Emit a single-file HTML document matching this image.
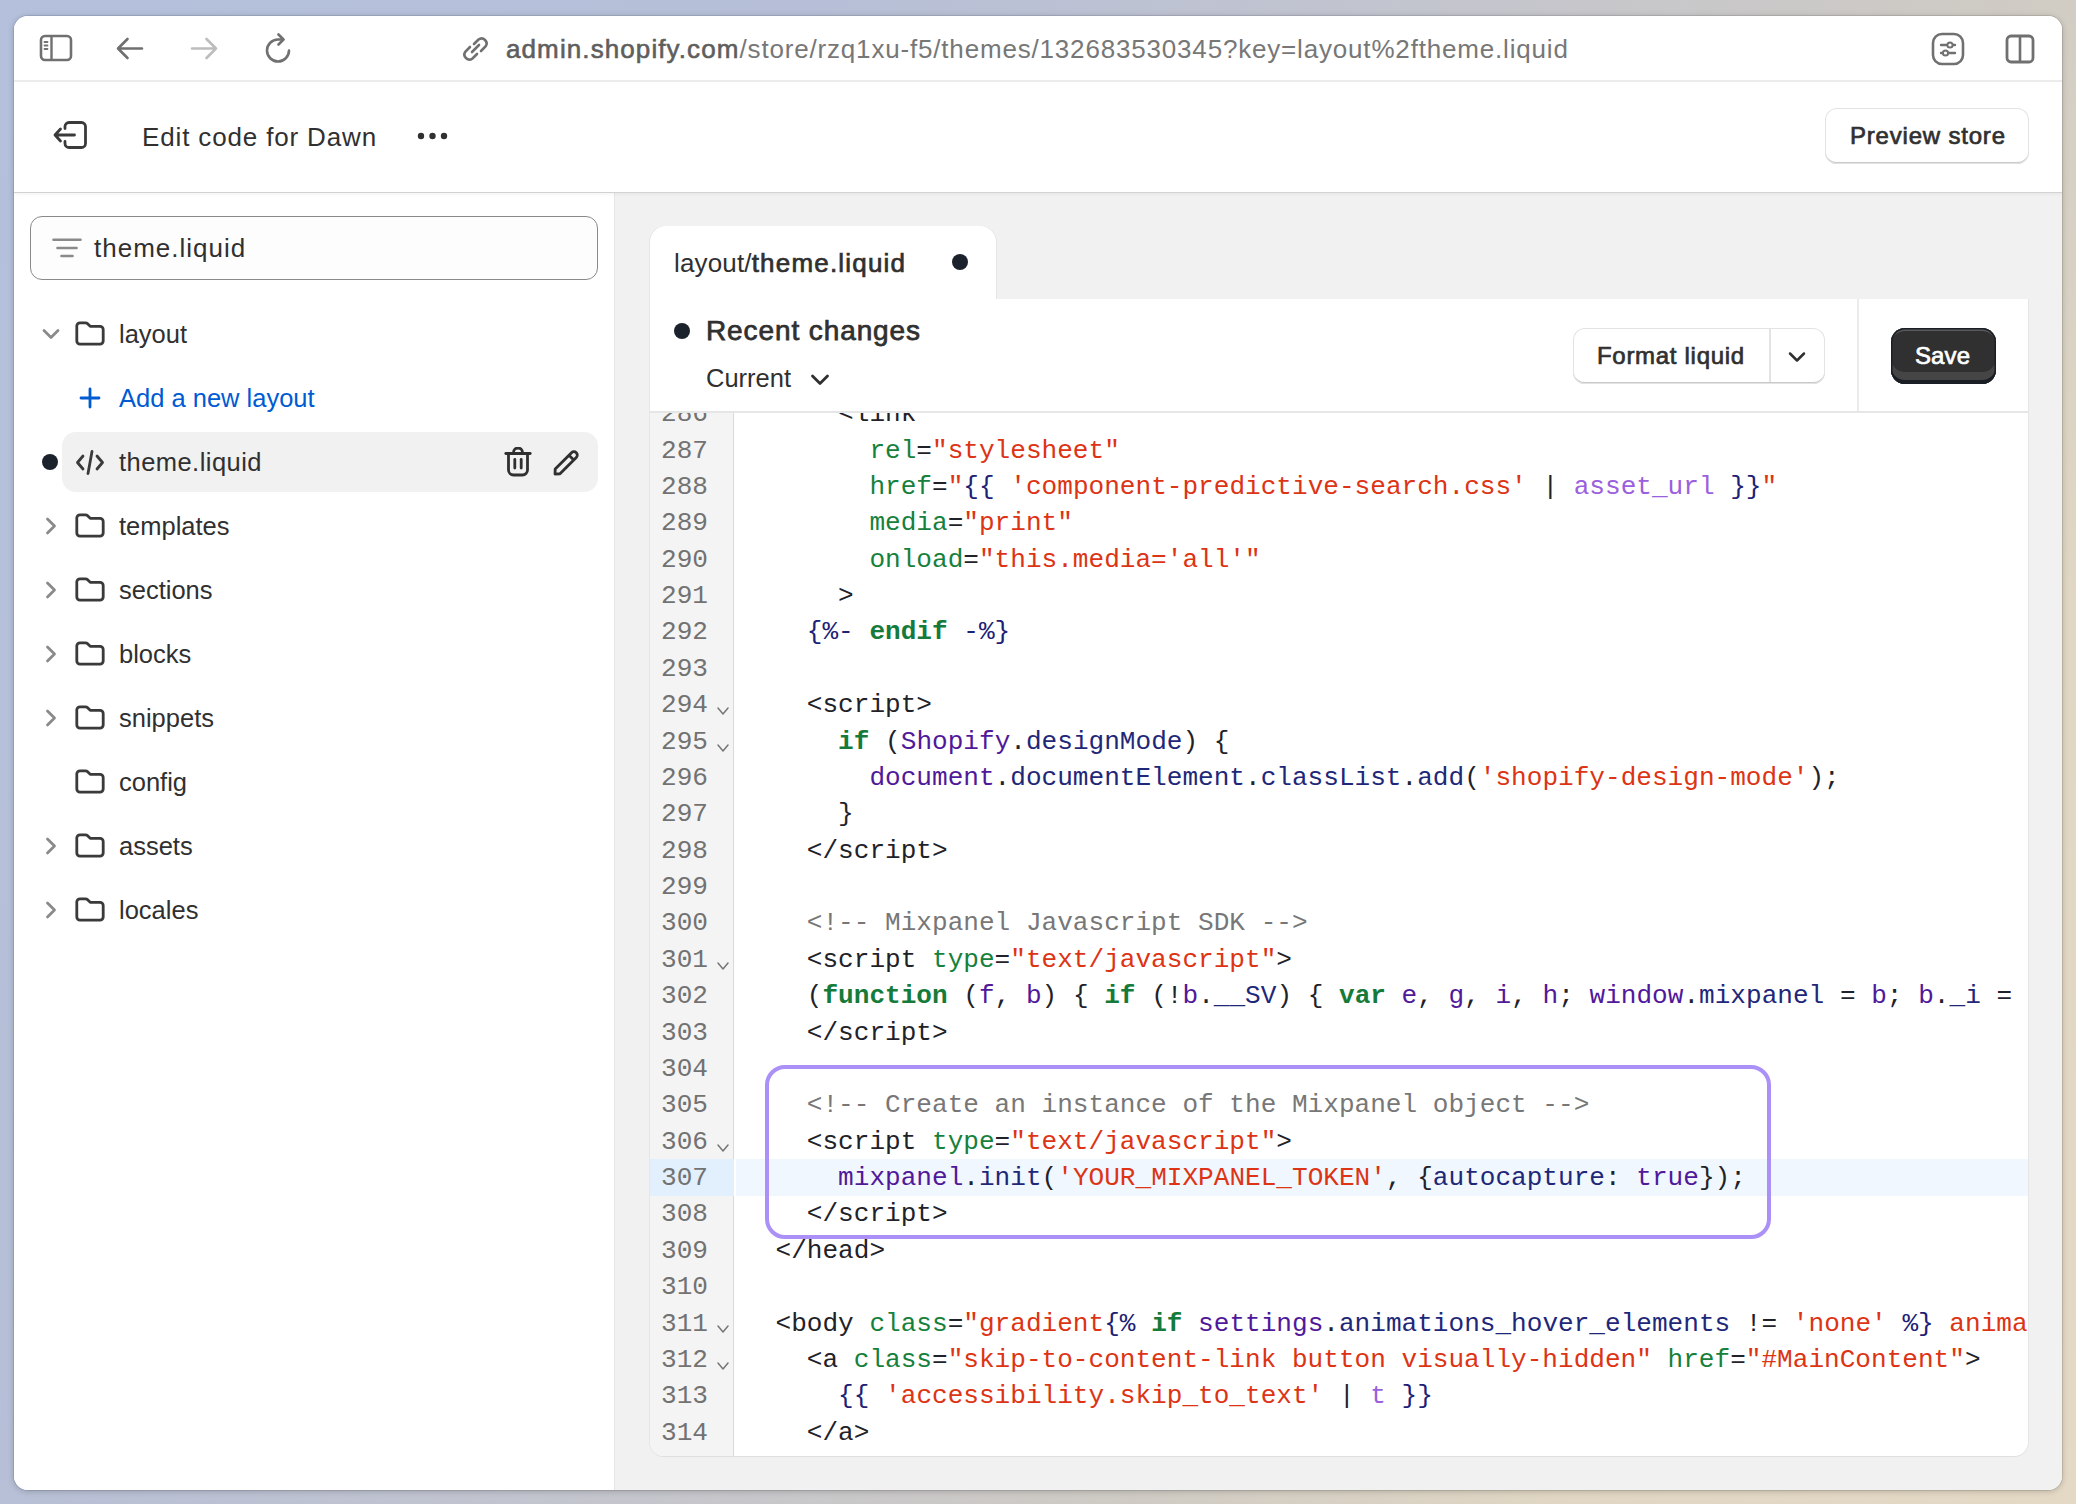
<!DOCTYPE html>
<html><head><meta charset="utf-8">
<style>
*{box-sizing:border-box;margin:0;padding:0}
html,body{width:2076px;height:1504px;overflow:hidden}
body{position:relative;font-family:"Liberation Sans",sans-serif;color:#303030;
background:linear-gradient(120deg,#b4c0dc 0%,#b6bfd7 28%,#bfc3d1 42%,#cfcbc4 68%,#e0d6c3 82%,#e4d9c5 100%)}
.abs{position:absolute}
#win{position:absolute;left:14px;top:16px;width:2048px;height:1474px;background:#fff;border-radius:14px;overflow:hidden;
box-shadow:0 0 0 1px rgba(0,0,0,0.09),0 1px 6px rgba(0,0,0,0.22)}
#toolbar{position:absolute;left:0;top:0;width:2048px;height:66px;background:#fff;border-bottom:2px solid #ededed}
#apphdr{position:absolute;left:0;top:66px;width:2048px;height:111px;background:#fff;border-bottom:1.5px solid #d2d2d2;box-shadow:0 1px 4px rgba(0,0,0,0.06);z-index:2}
#side{position:absolute;left:0;top:177px;width:600px;height:1297px;background:#fff}
#main{position:absolute;left:600px;top:177px;width:1448px;height:1297px;background:#f1f1f1;border-left:1px solid #e6e6e6}
.url{position:absolute;left:492px;top:16.5px;font-size:26px;line-height:32px;color:#777;white-space:nowrap;letter-spacing:0.82px}
.url b{color:#5e5e5e;font-weight:normal;letter-spacing:1.1px;-webkit-text-stroke:0.6px #5e5e5e}
.txt{position:absolute;white-space:nowrap}
.btn{position:absolute;background:#fff;border-radius:12px;box-shadow:inset 0 0 0 1px #e3e3e3,inset 0 -2px 0 #c9c9c9}
.row{position:absolute;left:0;width:600px;height:42px}
.row .lbl{position:absolute;left:105px;top:4px;font-size:25.5px;line-height:34px;color:#303030;white-space:nowrap}
.chev{position:absolute;left:28px;top:15px;width:18px;height:12px}
.chevr{position:absolute;left:31px;top:12px;width:12px;height:18px}
.fold{position:absolute;left:61px;top:8px;width:30px;height:25px}
#ed{position:absolute;left:0;top:0;width:2076px;height:1504px}
#code{position:absolute;left:650px;top:413px;width:1378px;height:1043px;overflow:hidden;border-radius:0 0 14px 14px}
#gut{position:absolute;left:0;top:0;width:84px;height:1043px;background:#f4f4f4;border-right:1.5px solid #d9d9d9}
#hl1{position:absolute;left:0;top:746.4px;width:84px;height:36.37px;background:#e2effc}
#hl2{position:absolute;left:85.5px;top:746.4px;width:1300px;height:36.37px;background:#f0f7fe}
pre{font-family:"Liberation Mono",monospace;font-size:26.08px;line-height:36.37px;white-space:pre}
#nums{position:absolute;left:0;top:-16.8px;width:58px;text-align:right;color:#727272}
#src{position:absolute;left:125.5px;top:-16.8px;color:#1f2329}
.fm{position:absolute;left:67px;width:12px;height:8px}
#box{position:absolute;left:115px;top:652px;width:1006px;height:174px;border:4px solid #ab90f8;border-radius:20px}
.a{color:#16813c}.s{color:#dc3414}.l{color:#1d2175}.k{color:#167b3a;font-weight:bold}.v{color:#51199a}.p{color:#1f2878}.f{color:#9a60de}.c{color:#777}
</style></head><body>
<div id="win">
  <div id="toolbar">
    <!-- sidebar icon -->
    <svg class="abs" style="left:25px;top:18px" width="34" height="28" viewBox="0 0 34 28"><rect x="2" y="2" width="30" height="24" rx="4" fill="none" stroke="#707070" stroke-width="2.6"/><line x1="12.5" y1="2" x2="12.5" y2="26" stroke="#707070" stroke-width="2.4"/><line x1="5.5" y1="8" x2="8.5" y2="8" stroke="#707070" stroke-width="1.8" stroke-linecap="round"/><line x1="5.5" y1="11.5" x2="8.5" y2="11.5" stroke="#707070" stroke-width="1.8" stroke-linecap="round"/><line x1="5.5" y1="15" x2="8.5" y2="15" stroke="#707070" stroke-width="1.8" stroke-linecap="round"/></svg>
    <!-- back -->
    <svg class="abs" style="left:101px;top:20px" width="30" height="26" viewBox="0 0 30 26"><path d="M3 12.5 H27 M12.5 3 L3 12.5 L12.5 22" fill="none" stroke="#707070" stroke-width="2.6" stroke-linecap="round" stroke-linejoin="round"/></svg>
    <!-- fwd -->
    <svg class="abs" style="left:175px;top:20px" width="30" height="26" viewBox="0 0 30 26"><path d="M3 12.5 H27 M17.5 3 L27 12.5 L17.5 22" fill="none" stroke="#bdbdbd" stroke-width="2.6" stroke-linecap="round" stroke-linejoin="round"/></svg>
    <!-- reload -->
    <svg class="abs" style="left:250px;top:17px" width="30" height="32" viewBox="0 0 30 32"><path d="M25 17.5 A11 11 0 1 1 14 6.5 H19" fill="none" stroke="#707070" stroke-width="2.6" stroke-linecap="round"/><path d="M14.5 1.5 L19.5 6.5 L14.5 11.5" fill="none" stroke="#707070" stroke-width="2.6" stroke-linecap="round" stroke-linejoin="round"/></svg>
    <!-- link -->
    <svg class="abs" style="left:447px;top:19px" width="30" height="28" viewBox="0 0 30 28"><g fill="none" stroke="#707070" stroke-width="2.6" stroke-linecap="round"><path d="M13 9 L17.5 4.5 A5 5 0 0 1 24.5 11.5 L20 16"/><path d="M16 19 L11.5 23.5 A5 5 0 0 1 4.5 16.5 L9 12"/><path d="M11 17 L18 10"/></g></svg>
    <div class="url"><b>admin.shopify.com</b>/store/rzq1xu-f5/themes/132683530345?key=layout%2ftheme.liquid</div>
    <!-- settings icon -->
    <svg class="abs" style="left:1917px;top:16px" width="34" height="34" viewBox="0 0 34 34"><rect x="2" y="2" width="30" height="30" rx="9" fill="none" stroke="#707070" stroke-width="2.6"/><g stroke="#707070" stroke-width="2.4" stroke-linecap="round" fill="none"><line x1="10" y1="13" x2="24" y2="13"/><line x1="10" y1="21" x2="24" y2="21"/></g><circle cx="19" cy="13" r="2.6" fill="#fff" stroke="#707070" stroke-width="2"/><circle cx="14.5" cy="21" r="2.6" fill="#fff" stroke="#707070" stroke-width="2"/></svg>
    <!-- split icon -->
    <svg class="abs" style="left:1991px;top:18px" width="30" height="30" viewBox="0 0 30 30"><rect x="2" y="2" width="26" height="26" rx="4" fill="none" stroke="#707070" stroke-width="2.8"/><line x1="15" y1="2" x2="15" y2="28" stroke="#707070" stroke-width="2.6"/></svg>
  </div>

  <div id="apphdr">
    <svg class="abs" style="left:39px;top:39px" width="34" height="28" viewBox="0 0 34 28"><g fill="none" stroke="#3a3a3a" stroke-width="2.8" stroke-linecap="round" stroke-linejoin="round"><path d="M12 7.5 V5.5 A4 4 0 0 1 16 1.5 H28.5 A4 4 0 0 1 32.5 5.5 V22.5 A4 4 0 0 1 28.5 26.5 H16 A4 4 0 0 1 12 22.5 V20.5"/><path d="M21.5 14 H2 M7.5 8 L2 14 L7.5 20"/></g></svg>
    <div class="txt" style="left:128px;top:38px;font-size:26px;line-height:34px;color:#303030;letter-spacing:0.85px">Edit code for Dawn</div>
    <svg class="abs" style="left:403px;top:49px" width="32" height="10" viewBox="0 0 32 10"><circle cx="4" cy="5" r="3.2" fill="#303030"/><circle cx="15.5" cy="5" r="3.2" fill="#303030"/><circle cx="27" cy="5" r="3.2" fill="#303030"/></svg>
    <div class="btn" style="left:1811px;top:26px;width:204px;height:56px"></div>
    <div class="txt" style="left:1836px;top:37px;font-size:24px;line-height:34px;color:#303030;letter-spacing:0.8px;-webkit-text-stroke:0.7px #303030">Preview store</div>
  </div>

  <div id="side">
    <div class="abs" style="left:16px;top:23px;width:568px;height:64px;border:1.5px solid #8a8a8a;border-radius:12px;background:#fdfdfd"></div>
    <svg class="abs" style="left:38px;top:44px" width="30" height="22" viewBox="0 0 30 22"><g stroke="#8a8a8a" stroke-width="2.6" stroke-linecap="round"><line x1="1.5" y1="2.7" x2="28.5" y2="2.7"/><line x1="5.5" y1="11" x2="24.5" y2="11"/><line x1="9.5" y1="19" x2="20.5" y2="19"/></g></svg>
    <div class="txt" style="left:80px;top:38px;font-size:26px;line-height:34px;color:#303030;letter-spacing:1px">theme.liquid</div>

    <!-- tree -->
    <div class="tree">
      <div class="row" style="top:120px"><svg class="chev" viewBox="0 0 18 12"><path d="M2 2.5 L9 9.5 L16 2.5" fill="none" stroke="#8a8a8a" stroke-width="2.8" stroke-linecap="round" stroke-linejoin="round"/></svg><svg class="fold" viewBox="0 0 30 25"><path d="M1.8 6.5 V5 A3.2 3.2 0 0 1 5 1.8 H10.5 A3 3 0 0 1 12.6 2.7 L15.2 5.3 H25 A3.2 3.2 0 0 1 28.2 8.5 V20 A3.2 3.2 0 0 1 25 23.2 H5 A3.2 3.2 0 0 1 1.8 20 Z" fill="none" stroke="#3a3a3a" stroke-width="2.8" stroke-linejoin="round"/></svg><span class="lbl">layout</span></div>
      <div class="row" style="top:184px"><svg class="abs" style="left:65px;top:10px" width="22" height="22" viewBox="0 0 22 22"><path d="M11 2 V20 M2 11 H20" stroke="#005bd3" stroke-width="2.8" stroke-linecap="round"/></svg><span class="lbl" style="color:#005bd3">Add a new layout</span></div>
      <div class="abs" style="left:48px;top:239px;width:536px;height:60px;background:#f1f1f1;border-radius:14px"></div>
      <div class="row" style="top:248px"><div class="abs" style="left:28px;top:13px;width:16px;height:16px;border-radius:50%;background:#1c222b"></div>
        <svg class="abs" style="left:61px;top:9px" width="30" height="25" viewBox="0 0 30 25"><g fill="none" stroke="#3a3a3a" stroke-width="2.8" stroke-linecap="round" stroke-linejoin="round"><path d="M8 6 L2.5 12.5 L8 19"/><path d="M22 6 L27.5 12.5 L22 19"/><path d="M17 1.5 L13 23.5"/></g></svg>
        <span class="lbl" style="letter-spacing:0.45px">theme.liquid</span>
        <svg class="abs" style="left:490px;top:6px" width="28" height="31" viewBox="0 0 28 31"><g fill="none" stroke="#303030" stroke-width="2.8" stroke-linecap="round" stroke-linejoin="round"><path d="M1.8 6.5 H26.2"/><path d="M9.5 6.5 V5.5 A4.5 4.5 0 0 1 18.5 5.5 V6.5"/><path d="M4.5 6.5 V23 A5 5 0 0 0 9.5 28 H18.5 A5 5 0 0 0 23.5 23 V6.5"/><path d="M10.8 12.5 V21"/><path d="M17.2 12.5 V21"/></g></svg>
        <svg class="abs" style="left:538px;top:8px" width="28" height="28" viewBox="0 0 28 28"><g fill="none" stroke="#303030" stroke-width="2.8" stroke-linejoin="round"><path d="M3 25 L3.2 20 L19.5 3.7 A3.3 3.3 0 0 1 24.3 8.5 L8 24.8 Z"/><path d="M17 6.2 L21.8 11"/></g></svg>
      </div>
      <div class="row" style="top:312px"><svg class="chevr" viewBox="0 0 12 18"><path d="M2.5 2 L9.5 9 L2.5 16" fill="none" stroke="#8a8a8a" stroke-width="2.8" stroke-linecap="round" stroke-linejoin="round"/></svg><svg class="fold" viewBox="0 0 30 25"><path d="M1.8 6.5 V5 A3.2 3.2 0 0 1 5 1.8 H10.5 A3 3 0 0 1 12.6 2.7 L15.2 5.3 H25 A3.2 3.2 0 0 1 28.2 8.5 V20 A3.2 3.2 0 0 1 25 23.2 H5 A3.2 3.2 0 0 1 1.8 20 Z" fill="none" stroke="#3a3a3a" stroke-width="2.8" stroke-linejoin="round"/></svg><span class="lbl">templates</span></div>
      <div class="row" style="top:376px"><svg class="chevr" viewBox="0 0 12 18"><path d="M2.5 2 L9.5 9 L2.5 16" fill="none" stroke="#8a8a8a" stroke-width="2.8" stroke-linecap="round" stroke-linejoin="round"/></svg><svg class="fold" viewBox="0 0 30 25"><path d="M1.8 6.5 V5 A3.2 3.2 0 0 1 5 1.8 H10.5 A3 3 0 0 1 12.6 2.7 L15.2 5.3 H25 A3.2 3.2 0 0 1 28.2 8.5 V20 A3.2 3.2 0 0 1 25 23.2 H5 A3.2 3.2 0 0 1 1.8 20 Z" fill="none" stroke="#3a3a3a" stroke-width="2.8" stroke-linejoin="round"/></svg><span class="lbl">sections</span></div>
      <div class="row" style="top:440px"><svg class="chevr" viewBox="0 0 12 18"><path d="M2.5 2 L9.5 9 L2.5 16" fill="none" stroke="#8a8a8a" stroke-width="2.8" stroke-linecap="round" stroke-linejoin="round"/></svg><svg class="fold" viewBox="0 0 30 25"><path d="M1.8 6.5 V5 A3.2 3.2 0 0 1 5 1.8 H10.5 A3 3 0 0 1 12.6 2.7 L15.2 5.3 H25 A3.2 3.2 0 0 1 28.2 8.5 V20 A3.2 3.2 0 0 1 25 23.2 H5 A3.2 3.2 0 0 1 1.8 20 Z" fill="none" stroke="#3a3a3a" stroke-width="2.8" stroke-linejoin="round"/></svg><span class="lbl">blocks</span></div>
      <div class="row" style="top:504px"><svg class="chevr" viewBox="0 0 12 18"><path d="M2.5 2 L9.5 9 L2.5 16" fill="none" stroke="#8a8a8a" stroke-width="2.8" stroke-linecap="round" stroke-linejoin="round"/></svg><svg class="fold" viewBox="0 0 30 25"><path d="M1.8 6.5 V5 A3.2 3.2 0 0 1 5 1.8 H10.5 A3 3 0 0 1 12.6 2.7 L15.2 5.3 H25 A3.2 3.2 0 0 1 28.2 8.5 V20 A3.2 3.2 0 0 1 25 23.2 H5 A3.2 3.2 0 0 1 1.8 20 Z" fill="none" stroke="#3a3a3a" stroke-width="2.8" stroke-linejoin="round"/></svg><span class="lbl">snippets</span></div>
      <div class="row" style="top:568px"><svg class="fold" viewBox="0 0 30 25"><path d="M1.8 6.5 V5 A3.2 3.2 0 0 1 5 1.8 H10.5 A3 3 0 0 1 12.6 2.7 L15.2 5.3 H25 A3.2 3.2 0 0 1 28.2 8.5 V20 A3.2 3.2 0 0 1 25 23.2 H5 A3.2 3.2 0 0 1 1.8 20 Z" fill="none" stroke="#3a3a3a" stroke-width="2.8" stroke-linejoin="round"/></svg><span class="lbl">config</span></div>
      <div class="row" style="top:632px"><svg class="chevr" viewBox="0 0 12 18"><path d="M2.5 2 L9.5 9 L2.5 16" fill="none" stroke="#8a8a8a" stroke-width="2.8" stroke-linecap="round" stroke-linejoin="round"/></svg><svg class="fold" viewBox="0 0 30 25"><path d="M1.8 6.5 V5 A3.2 3.2 0 0 1 5 1.8 H10.5 A3 3 0 0 1 12.6 2.7 L15.2 5.3 H25 A3.2 3.2 0 0 1 28.2 8.5 V20 A3.2 3.2 0 0 1 25 23.2 H5 A3.2 3.2 0 0 1 1.8 20 Z" fill="none" stroke="#3a3a3a" stroke-width="2.8" stroke-linejoin="round"/></svg><span class="lbl">assets</span></div>
      <div class="row" style="top:696px"><svg class="chevr" viewBox="0 0 12 18"><path d="M2.5 2 L9.5 9 L2.5 16" fill="none" stroke="#8a8a8a" stroke-width="2.8" stroke-linecap="round" stroke-linejoin="round"/></svg><svg class="fold" viewBox="0 0 30 25"><path d="M1.8 6.5 V5 A3.2 3.2 0 0 1 5 1.8 H10.5 A3 3 0 0 1 12.6 2.7 L15.2 5.3 H25 A3.2 3.2 0 0 1 28.2 8.5 V20 A3.2 3.2 0 0 1 25 23.2 H5 A3.2 3.2 0 0 1 1.8 20 Z" fill="none" stroke="#3a3a3a" stroke-width="2.8" stroke-linejoin="round"/></svg><span class="lbl">locales</span></div>
    </div>
  </div>
  <div id="main"></div>
</div>
<div id="ed">
  <div class="abs" style="left:650px;top:226px;width:346px;height:80px;background:#fff;border-radius:16px 16px 0 0;box-shadow:1px 0 0 #e6e6e6,-1px 0 0 #e6e6e6"></div>
  <div class="abs" style="left:650px;top:299px;width:1378px;height:1157px;background:#fff;border-radius:0 0 14px 14px;box-shadow:1px 0 0 #e6e6e6,-1px 0 0 #e6e6e6,0 1px 1px rgba(0,0,0,0.08)"></div>
  <div class="txt" style="left:674px;top:245.5px;font-size:26px;line-height:34px;color:#303030;letter-spacing:0.15px">layout/<b style="font-weight:normal;letter-spacing:1.2px;-webkit-text-stroke:0.7px #303030">theme.liquid</b></div>
  <div class="abs" style="left:952px;top:254px;width:16px;height:16px;border-radius:50%;background:#1c222b"></div>
  <div class="abs" style="left:674px;top:323px;width:16px;height:16px;border-radius:50%;background:#1c222b"></div>
  <div class="txt" style="left:706px;top:314px;font-size:28px;line-height:34px;color:#303030;letter-spacing:0.9px;-webkit-text-stroke:0.75px #303030">Recent changes</div>
  <div class="txt" style="left:706px;top:361px;font-size:25.5px;line-height:34px;color:#303030">Current</div>
  <svg class="abs" style="left:810px;top:373px" width="20" height="14" viewBox="0 0 20 14"><path d="M2.5 3 L10 10.5 L17.5 3" fill="none" stroke="#303030" stroke-width="2.8" stroke-linecap="round" stroke-linejoin="round"/></svg>
  <div class="btn" style="left:1573px;top:328px;width:252px;height:56px"></div>
  <div class="abs" style="left:1769px;top:329px;width:2px;height:53px;background:#e3e3e3"></div>
  <div class="txt" style="left:1597px;top:339px;font-size:24px;line-height:34px;color:#303030;letter-spacing:0.7px;-webkit-text-stroke:0.7px #303030">Format liquid</div>
  <svg class="abs" style="left:1787px;top:350px" width="20" height="14" viewBox="0 0 20 14"><path d="M3 3.5 L10 10.5 L17 3.5" fill="none" stroke="#303030" stroke-width="2.5" stroke-linecap="round" stroke-linejoin="round"/></svg>
  <div class="abs" style="left:1857px;top:299px;width:2px;height:113px;background:#ebebeb"></div>
  <div class="abs" style="left:1891px;top:328px;width:105px;height:56px;border-radius:14px;background:#303030;box-shadow:inset 0 0 0 1.5px #1a1f26,inset 0 3px 0 #5a5a5a,inset 0 -4px 0 #1a1f26,inset 0 -12px 0 #454545"></div>
  <div class="txt" style="left:1915px;top:339px;font-size:24px;line-height:34px;color:#fff;letter-spacing:0.1px;-webkit-text-stroke:0.7px #fff">Save</div>
  <div class="abs" style="left:650px;top:411px;width:1378px;height:2px;background:#e6e6e6"></div>
  <div id="code">
    <div id="gut"></div>
    <div id="hl1"></div><div id="hl2"></div>
    <pre id="nums">286
287
288
289
290
291
292
293
294
295
296
297
298
299
300
301
302
303
304
305
306
307
308
309
310
311
312
313
314</pre>
    <svg class="fm" style="top:294.16px" viewBox="0 0 12 8"><path d="M1 1 L6 7 L11 1" fill="none" stroke="#777" stroke-width="1.5" stroke-linecap="round" stroke-linejoin="round"/></svg><svg class="fm" style="top:330.53px" viewBox="0 0 12 8"><path d="M1 1 L6 7 L11 1" fill="none" stroke="#777" stroke-width="1.5" stroke-linecap="round" stroke-linejoin="round"/></svg><svg class="fm" style="top:548.75px" viewBox="0 0 12 8"><path d="M1 1 L6 7 L11 1" fill="none" stroke="#777" stroke-width="1.5" stroke-linecap="round" stroke-linejoin="round"/></svg><svg class="fm" style="top:730.60px" viewBox="0 0 12 8"><path d="M1 1 L6 7 L11 1" fill="none" stroke="#777" stroke-width="1.5" stroke-linecap="round" stroke-linejoin="round"/></svg><svg class="fm" style="top:912.45px" viewBox="0 0 12 8"><path d="M1 1 L6 7 L11 1" fill="none" stroke="#777" stroke-width="1.5" stroke-linecap="round" stroke-linejoin="round"/></svg><svg class="fm" style="top:948.82px" viewBox="0 0 12 8"><path d="M1 1 L6 7 L11 1" fill="none" stroke="#777" stroke-width="1.5" stroke-linecap="round" stroke-linejoin="round"/></svg>
    <pre id="src">    &lt;link
      <span class="a">rel</span>=<span class="s">"stylesheet"</span>
      <span class="a">href</span>=<span class="s">"</span><span class="l">{{</span> <span class="s">'component-predictive-search.css'</span> | <span class="f">asset_url</span><span class="l"> }}</span><span class="s">"</span>
      <span class="a">media</span>=<span class="s">"print"</span>
      <span class="a">onload</span>=<span class="s">"this.media='all'"</span>
    &gt;
  <span class="l">{%-</span> <span class="k">endif</span><span class="l"> -%}</span>

  &lt;script&gt;
    <span class="k">if</span> (<span class="v">Shopify</span>.<span class="p">designMode</span>) {
      <span class="v">document</span>.<span class="p">documentElement</span>.<span class="p">classList</span>.<span class="p">add</span>(<span class="s">'shopify-design-mode'</span>);
    }
  &lt;/script&gt;

  <span class="c">&lt;!-- Mixpanel Javascript SDK --&gt;</span>
  &lt;script <span class="a">type</span>=<span class="s">"text/javascript"</span>&gt;
  (<span class="k">function</span> (<span class="v">f</span>, <span class="v">b</span>) { <span class="k">if</span> (!<span class="v">b</span>.<span class="p">__SV</span>) { <span class="k">var</span> <span class="v">e</span>, <span class="v">g</span>, <span class="v">i</span>, <span class="v">h</span>; <span class="v">window</span>.<span class="p">mixpanel</span> = <span class="v">b</span>; <span class="v">b</span>.<span class="p">_i</span> = <span class="v">[]</span>; <span class="v">b</span>.init
  &lt;/script&gt;

  <span class="c">&lt;!-- Create an instance of the Mixpanel object --&gt;</span>
  &lt;script <span class="a">type</span>=<span class="s">"text/javascript"</span>&gt;
    <span class="v">mixpanel</span>.<span class="p">init</span>(<span class="s">'YOUR_MIXPANEL_TOKEN'</span>, {<span class="p">autocapture</span>: <span class="v">true</span>});
  &lt;/script&gt;
&lt;/head&gt;

&lt;body <span class="a">class</span>=<span class="s">"gradient</span><span class="l">{%</span> <span class="k">if</span> <span class="v">settings</span>.<span class="p">animations_hover_elements</span> != <span class="s">'none'</span><span class="l"> %}</span><span class="s"> animate--hover-</span>
  &lt;a <span class="a">class</span>=<span class="s">"skip-to-content-link button visually-hidden"</span> <span class="a">href</span>=<span class="s">"#MainContent"</span>&gt;
    <span class="l">{{</span> <span class="s">'accessibility.skip_to_text'</span> | <span class="f">t</span><span class="l"> }}</span>
  &lt;/a&gt;</pre>
    <div id="box"></div>
  </div>
</div>
</body></html>
